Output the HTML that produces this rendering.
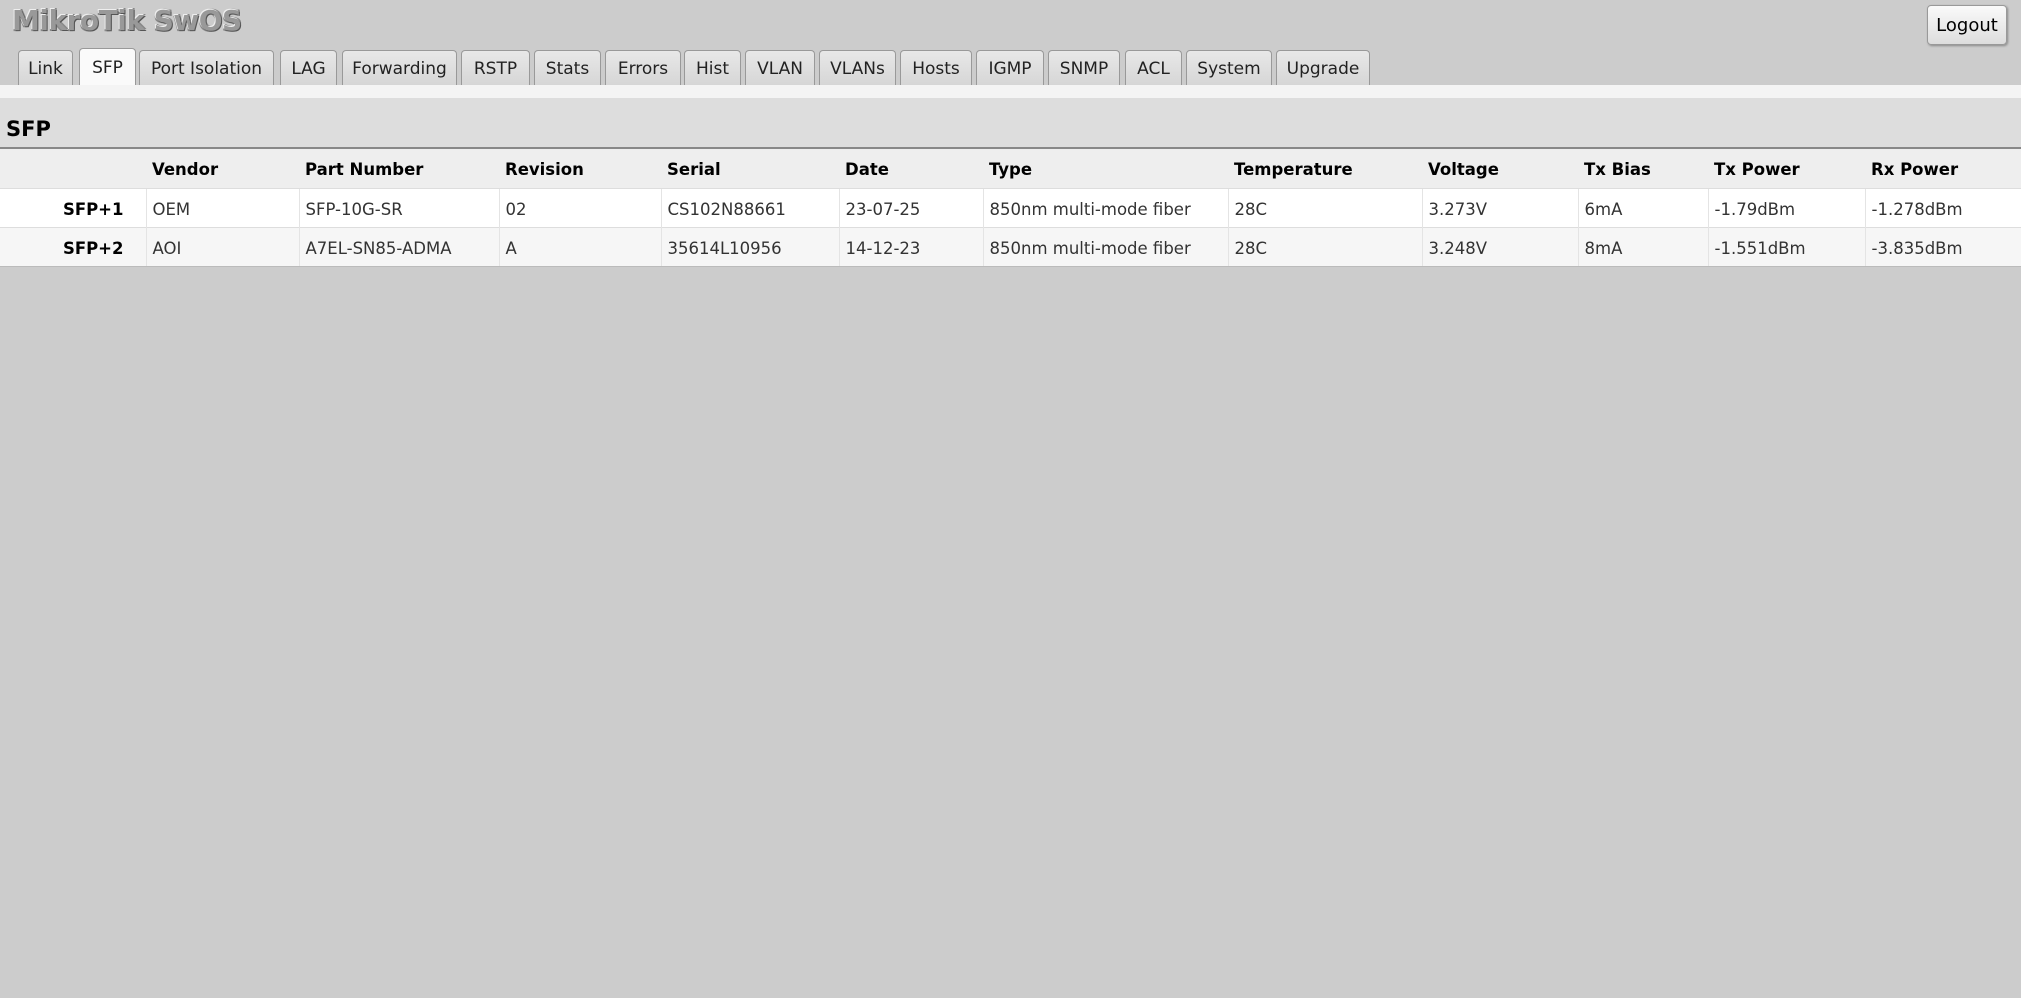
<!DOCTYPE html>
<html><head><meta charset="utf-8"><style>
html,body{margin:0;padding:0;width:2021px;height:998px;background:#ccc;font-family:"DejaVu Sans","Liberation Sans",sans-serif;overflow:hidden}
.title{position:absolute;left:12px;top:4px;font-size:28px;font-weight:bold;color:#999;letter-spacing:-0.5px;text-shadow:1px 1px 0 #555,-1px -1px 0 #eee,1px -1px 0 #888,-1px 1px 0 #888}
.logout{position:absolute;left:1927px;top:5px;width:78px;height:38px;border:1px solid #999;border-radius:4px;background:linear-gradient(#fafafa,#ddd);box-shadow:1px 1px 2px #888;font-size:18px;line-height:40px;text-align:center;color:#000}
.tab{position:absolute;top:50px;height:35px;box-sizing:border-box;border:1px solid #999;border-bottom:none;border-radius:4px 4px 0 0;background:linear-gradient(#e8e8e8,#d6d6d6);font-size:17px;line-height:36px;text-align:center;color:#222}
.tab.act{background:#fafafa;top:48px;height:37px;line-height:38px}
.strip{position:absolute;left:0;top:85px;width:2021px;height:13px;background:#f4f4f4}
.band{position:absolute;left:0;top:98px;width:2021px;height:49px;background:#ddd;border-bottom:2px solid #888}
.band b{position:absolute;left:6px;top:19px;font-size:21px;color:#000}
table{position:absolute;left:0;top:149px;width:2021px;border-collapse:collapse;font-size:16.5px}
td,th{padding:2px 6px 0;text-align:left;white-space:nowrap;color:#333}
th{height:37px;background:#eee;color:#000;font-weight:bold}
tr.r td{height:36px;border-top:1px solid #ddd;border-left:1px solid #e4e4e4}
tr.r td:first-child{border-left:none;text-align:right;font-weight:bold;color:#000;padding-right:22px}
tr.w td{background:#fff}
tr.g td{background:#f6f6f6;border-bottom:1px solid #bbb}
</style></head><body>
<div class="title">MikroTik SwOS</div>
<div class="logout">Logout</div>
<div class="tab" style="left:18px;width:55px">Link</div>
<div class="tab act" style="left:79px;width:57px">SFP</div>
<div class="tab" style="left:139px;width:135px">Port Isolation</div>
<div class="tab" style="left:280px;width:57px">LAG</div>
<div class="tab" style="left:342px;width:115px">Forwarding</div>
<div class="tab" style="left:461px;width:69px">RSTP</div>
<div class="tab" style="left:534px;width:67px">Stats</div>
<div class="tab" style="left:605px;width:76px">Errors</div>
<div class="tab" style="left:684px;width:57px">Hist</div>
<div class="tab" style="left:745px;width:70px">VLAN</div>
<div class="tab" style="left:819px;width:77px">VLANs</div>
<div class="tab" style="left:900px;width:72px">Hosts</div>
<div class="tab" style="left:976px;width:68px">IGMP</div>
<div class="tab" style="left:1048px;width:72px">SNMP</div>
<div class="tab" style="left:1125px;width:57px">ACL</div>
<div class="tab" style="left:1186px;width:86px">System</div>
<div class="tab" style="left:1276px;width:94px">Upgrade</div>
<div class="strip"></div>
<div class="band"><b>SFP</b></div>
<table>
<colgroup><col style="width:146px"><col style="width:153px"><col style="width:200px"><col style="width:162px"><col style="width:178px"><col style="width:144px"><col style="width:245px"><col style="width:194px"><col style="width:156px"><col style="width:130px"><col style="width:157px"><col></colgroup>
<tr><th></th><th>Vendor</th><th>Part Number</th><th>Revision</th><th>Serial</th><th>Date</th><th>Type</th><th>Temperature</th><th>Voltage</th><th>Tx Bias</th><th>Tx Power</th><th>Rx Power</th></tr>
<tr class="r w"><td>SFP+1</td><td>OEM</td><td>SFP-10G-SR</td><td>02</td><td>CS102N88661</td><td>23-07-25</td><td>850nm multi-mode fiber</td><td>28C</td><td>3.273V</td><td>6mA</td><td>-1.79dBm</td><td>-1.278dBm</td></tr>
<tr class="r g"><td>SFP+2</td><td>AOI</td><td>A7EL-SN85-ADMA</td><td>A</td><td>35614L10956</td><td>14-12-23</td><td>850nm multi-mode fiber</td><td>28C</td><td>3.248V</td><td>8mA</td><td>-1.551dBm</td><td>-3.835dBm</td></tr>
</table>
</body></html>
